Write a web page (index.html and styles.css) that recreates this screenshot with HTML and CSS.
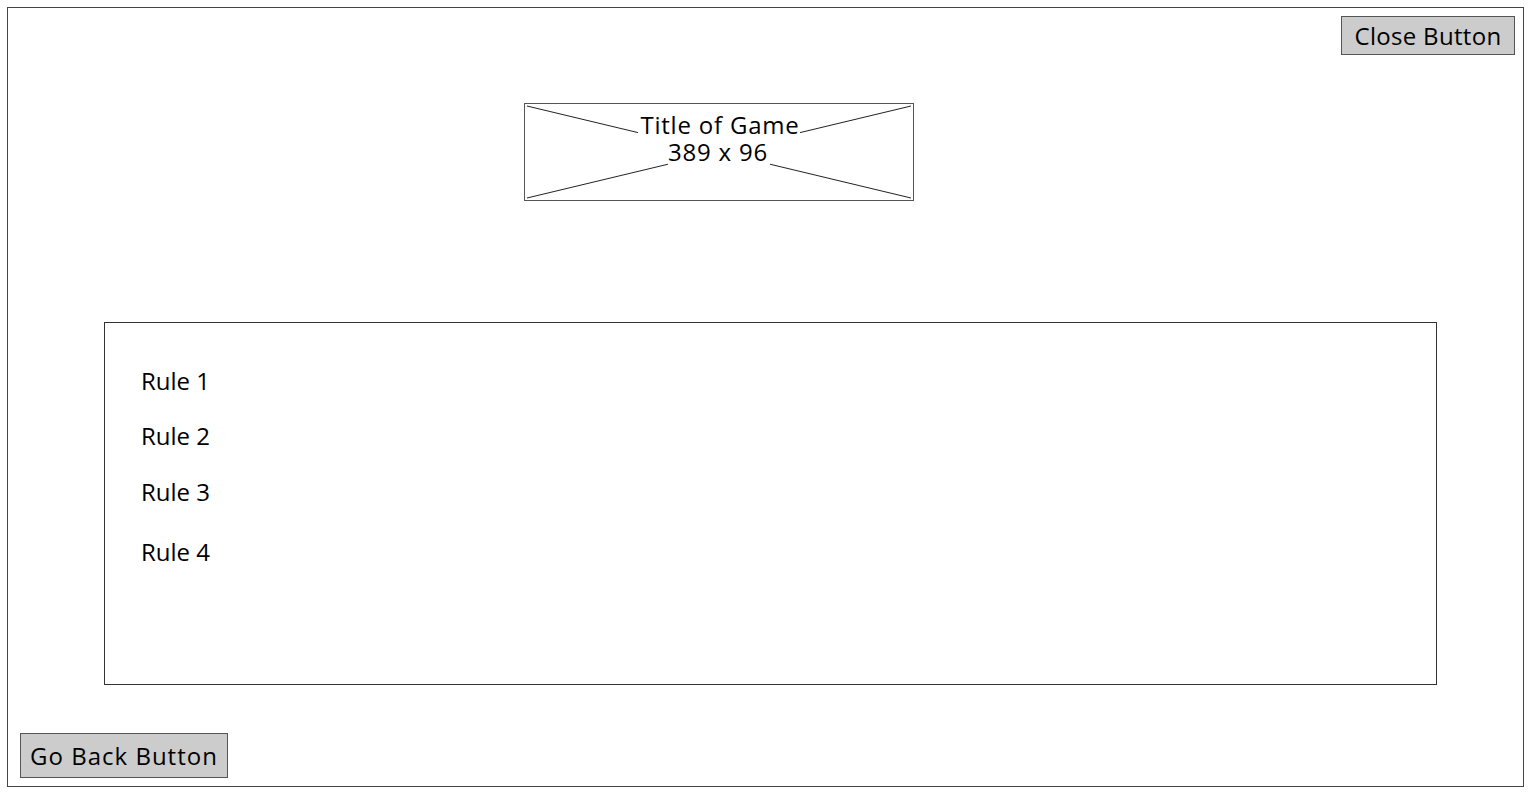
FILE: index.html
```html
<!DOCTYPE html>
<html>
<head>
<meta charset="utf-8">
<link rel="stylesheet" href="styles.css">
</head>
<body>
<div class="frame">
  <div class="top-row">
    <button class="btn btn-close">Close Button</button>
  </div>
  <div class="title-img">
    <svg class="cross" viewBox="0 0 388 96" preserveAspectRatio="none" width="388" height="96">
      <line x1="2" y1="2" x2="386" y2="94" stroke="#222" stroke-width="1"/>
      <line x1="386" y1="2" x2="2" y2="94" stroke="#222" stroke-width="1"/>
    </svg>
    <div class="title-text"><span class="title-label">Title of Game<br>389 x 96</span></div>
  </div>
  <div class="rules">
    <p class="rule r1">Rule 1</p>
    <p class="rule r2">Rule 2</p>
    <p class="rule r3">Rule 3</p>
    <p class="rule r4">Rule 4</p>
  </div>
  <div class="bottom-row">
    <button class="btn btn-back">Go Back Button</button>
  </div>
</div>
</body>
</html>
```

FILE: styles.css
```css
html, body {
  margin: 0;
  padding: 0;
  background: #fff;
}
body {
  font-family: "Open Sans", "DejaVu Sans", sans-serif;
  color: #000;
}
.frame {
  margin: 7px 0 0 7px;
  width: 1515px;
  height: 778px;
  border: 1px solid #444;
  display: flex;
  flex-direction: column;
}
.top-row {
  display: flex;
  justify-content: flex-end;
  padding: 8px 8px 0 0;
}
.btn {
  font-family: "Open Sans", "DejaVu Sans", sans-serif;
  font-size: 24px;
  color: #000;
  background: #cccccc;
  border: 1px solid #555;
  padding: 0;
  margin: 0;
  box-sizing: border-box;
  display: flex;
  align-items: center;
  justify-content: center;
}
.btn-close {
  width: 174px;
  height: 39px;
  letter-spacing: 0.3px;
}
.title-img {
  position: relative;
  margin: 48px 0 0 516px;
  width: 388px;
  height: 96px;
  border: 1px solid #555;
}
.cross {
  position: absolute;
  left: 0;
  top: 0;
}
.title-text {
  position: relative;
  text-align: center;
  padding-top: 7px;
  font-size: 24px;
  line-height: 27px;
  letter-spacing: 0.8px;
}
.title-label {
  background: #fff;
  padding: 0 2px;
}
.rules {
  margin: 121px 0 0 96px;
  width: 1295px;
  height: 317px;
  border: 1px solid #333;
  padding: 44px 0 0 36px;
}
.rule {
  margin: 0;
  font-size: 24px;
  line-height: 28px;
}
.r2 { margin-top: 27px; }
.r3 { margin-top: 28px; }
.r4 { margin-top: 32px; }
.bottom-row {
  display: flex;
  padding: 48px 0 0 12px;
}
.btn-back {
  width: 208px;
  height: 45px;
  letter-spacing: 1px;
}
```
